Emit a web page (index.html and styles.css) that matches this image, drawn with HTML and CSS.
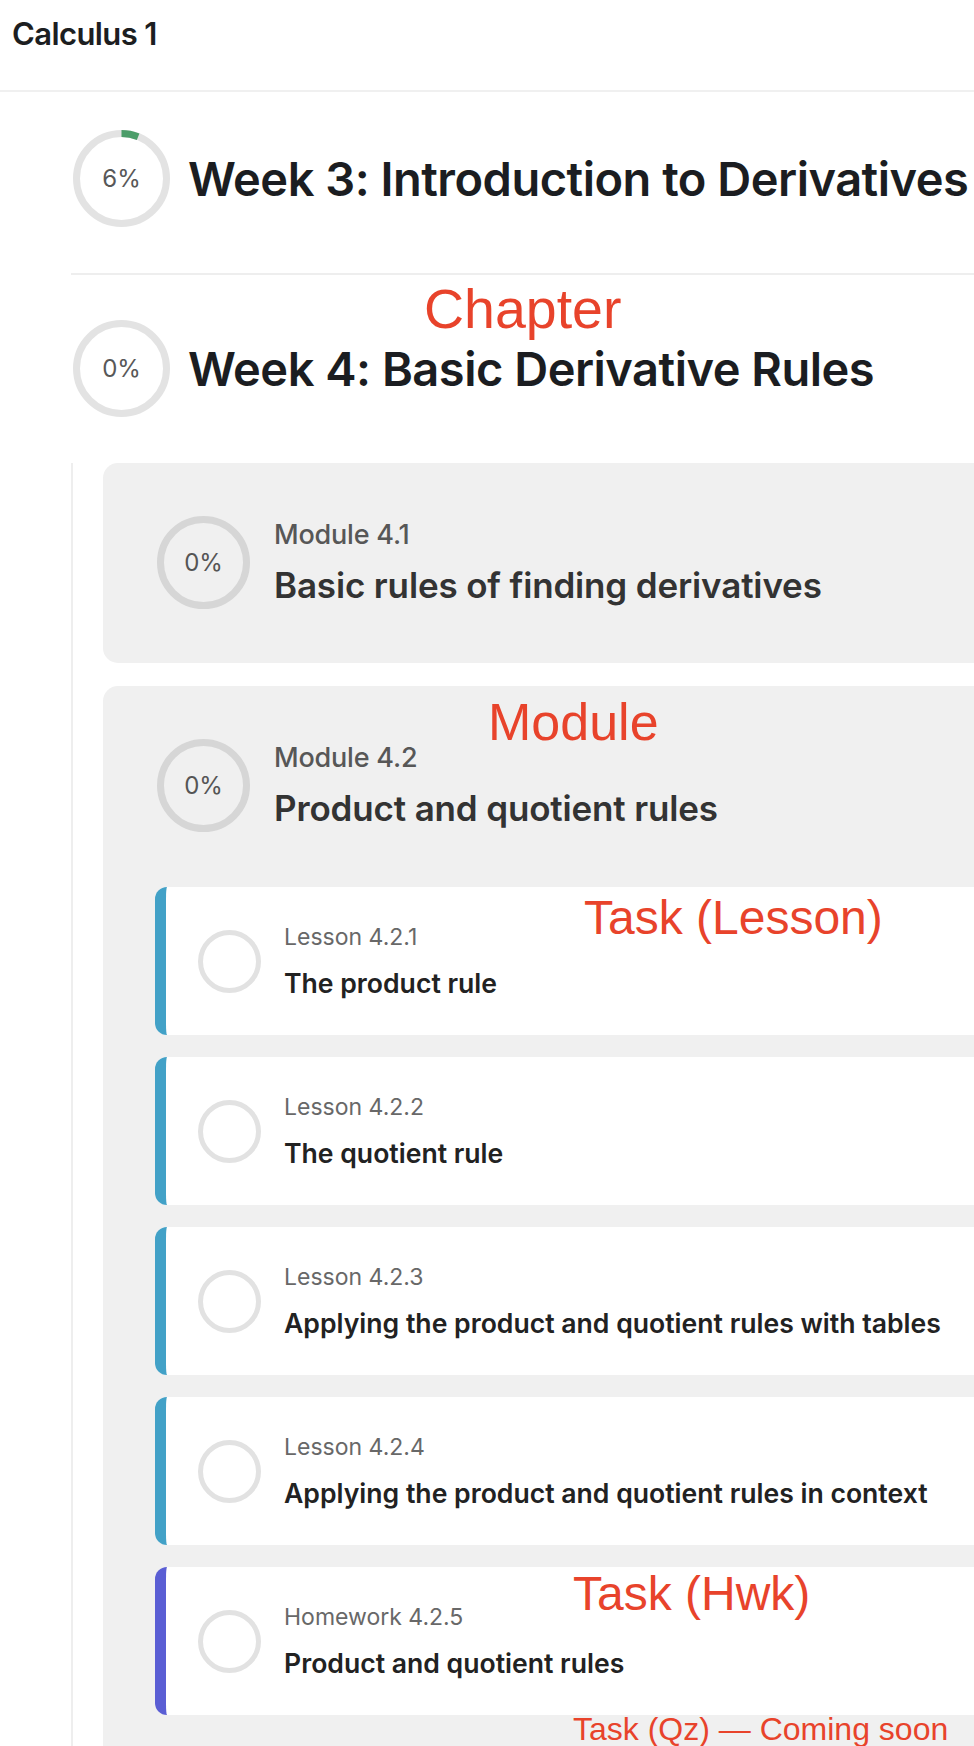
FILE: index.html
```html
<!DOCTYPE html>
<html lang="en">
<head>
<meta charset="utf-8">
<title>Calculus 1</title>
<link rel="stylesheet" href="styles.css">
</head>
<body>
<div class="page">
  <header class="topbar">
    <h1 class="course-title">Calculus 1</h1>
  </header>

  <main class="course">
    <section class="chapter">
      <div class="chapter-head first">
        <div class="ring ring-chapter">
          <svg viewBox="0 0 97 97" width="97" height="97">
            <circle cx="48.5" cy="48.5" r="45" fill="none" stroke="#e3e3e3" stroke-width="7"/>
            <circle cx="48.5" cy="48.5" r="45" fill="none" stroke="#4b9d69" stroke-width="7" stroke-dasharray="17 300" transform="rotate(-90 48.5 48.5)"/>
          </svg>
          <span class="ring-label">6%</span>
        </div>
        <h2 class="chapter-title">Week 3: Introduction to Derivatives</h2>
      </div>
    </section>

    <div class="divider"></div>

    <section class="chapter">
      <div class="chapter-head">
        <div class="ring ring-chapter">
          <svg viewBox="0 0 97 97" width="97" height="97">
            <circle cx="48.5" cy="48.5" r="45" fill="none" stroke="#e3e3e3" stroke-width="7"/>
          </svg>
          <span class="ring-label">0%</span>
        </div>
        <h2 class="chapter-title">Week 4: Basic Derivative Rules</h2>
      </div>

      <div class="modules">
        <article class="module">
          <div class="module-head">
            <div class="ring ring-module">
              <svg viewBox="0 0 93 93" width="93" height="93">
                <circle cx="46.5" cy="46.5" r="43" fill="none" stroke="#d6d6d6" stroke-width="7"/>
              </svg>
              <span class="ring-label module-pct">0%</span>
            </div>
            <div class="module-text">
              <div class="module-label">Module 4.1</div>
              <div class="module-title">Basic rules of finding derivatives</div>
            </div>
          </div>
        </article>

        <article class="module">
          <div class="module-head">
            <div class="ring ring-module">
              <svg viewBox="0 0 93 93" width="93" height="93">
                <circle cx="46.5" cy="46.5" r="43" fill="none" stroke="#d6d6d6" stroke-width="7"/>
              </svg>
              <span class="ring-label module-pct">0%</span>
            </div>
            <div class="module-text">
              <div class="module-label">Module 4.2</div>
              <div class="module-title">Product and quotient rules</div>
            </div>
          </div>

          <div class="tasks">
            <div class="task lesson">
              <svg class="task-ring" viewBox="0 0 63 63" width="63" height="63">
                <circle cx="31.5" cy="31.5" r="29" fill="none" stroke="#e2e2e2" stroke-width="5"/>
              </svg>
              <div class="task-text">
                <div class="task-label">Lesson 4.2.1</div>
                <div class="task-title">The product rule</div>
              </div>
            </div>
            <div class="task lesson">
              <svg class="task-ring" viewBox="0 0 63 63" width="63" height="63">
                <circle cx="31.5" cy="31.5" r="29" fill="none" stroke="#e2e2e2" stroke-width="5"/>
              </svg>
              <div class="task-text">
                <div class="task-label">Lesson 4.2.2</div>
                <div class="task-title">The quotient rule</div>
              </div>
            </div>
            <div class="task lesson">
              <svg class="task-ring" viewBox="0 0 63 63" width="63" height="63">
                <circle cx="31.5" cy="31.5" r="29" fill="none" stroke="#e2e2e2" stroke-width="5"/>
              </svg>
              <div class="task-text">
                <div class="task-label">Lesson 4.2.3</div>
                <div class="task-title">Applying the product and quotient rules with tables</div>
              </div>
            </div>
            <div class="task lesson">
              <svg class="task-ring" viewBox="0 0 63 63" width="63" height="63">
                <circle cx="31.5" cy="31.5" r="29" fill="none" stroke="#e2e2e2" stroke-width="5"/>
              </svg>
              <div class="task-text">
                <div class="task-label">Lesson 4.2.4</div>
                <div class="task-title">Applying the product and quotient rules in context</div>
              </div>
            </div>
            <div class="task homework">
              <svg class="task-ring" viewBox="0 0 63 63" width="63" height="63">
                <circle cx="31.5" cy="31.5" r="29" fill="none" stroke="#e2e2e2" stroke-width="5"/>
              </svg>
              <div class="task-text">
                <div class="task-label">Homework 4.2.5</div>
                <div class="task-title">Product and quotient rules</div>
              </div>
            </div>
          </div>
        </article>
      </div>
    </section>
  </main>

  <div class="note note-chapter">Chapter</div>
  <div class="note note-module">Module</div>
  <div class="note note-lesson">Task (Lesson)</div>
  <div class="note note-hwk">Task (Hwk)</div>
  <div class="note note-qz">Task (Qz) — Coming soon</div>
</div>
</body>
</html>
```

FILE: styles.css
```css
html, body {
  margin: 0;
  padding: 0;
  background: #ffffff;
  overflow: hidden;
}

.page {
  position: relative;
  width: 974px;
  height: 1746px;
  overflow: hidden;
  font-family: Inter, "Noto Sans", "Liberation Sans", sans-serif;
}

.topbar {
  height: 92px;
  box-sizing: border-box;
  padding: 16px 12px 0;
  border-bottom: 2px solid #f0f0f0;
}

.course-title {
  margin: 0;
  font-size: 31px;
  line-height: 36px;
  font-weight: 600;
  letter-spacing: -0.6px;
  color: #1c1e21;
}

.course {
  width: 1010px;
  padding-left: 71px;
}

.chapter-head {
  display: flex;
  align-items: center;
  gap: 18px;
  padding: 45px 0 46px 2px;
}

.chapter-head.first {
  padding-top: 38px;
}

.divider {
  height: 2px;
  background: #eeeeee;
}

.ring {
  display: grid;
  place-items: center;
  flex: none;
}

.ring > svg,
.ring > .ring-label {
  grid-area: 1 / 1;
}

.ring-label {
  font-size: 24px;
  font-weight: 400;
  color: #585858;
}

.module-pct {
  font-size: 24px;
  color: #555555;
}

.chapter-title {
  margin: 0;
  font-size: 47px;
  line-height: 56px;
  font-weight: 600;
  letter-spacing: -0.5px;
  color: #1b1d21;
  white-space: nowrap;
}

.modules {
  border-left: 2px solid #eeeeee;
  padding-left: 30px;
  display: flex;
  flex-direction: column;
  gap: 23px;
}

.module {
  background: #f0f0f0;
  border-radius: 15px;
  padding: 53px 0 54px 52px;
}

.module-head {
  display: flex;
  align-items: center;
  gap: 24px;
  padding-left: 2px;
}

.module-text {
  display: flex;
  flex-direction: column;
  gap: 13px;
}

.module-label {
  font-size: 27px;
  line-height: 32px;
  font-weight: 500;
  color: #575757;
  letter-spacing: -0.2px;
}

.module-title {
  font-size: 35px;
  line-height: 42px;
  font-weight: 600;
  color: #333333;
  letter-spacing: -0.15px;
  white-space: nowrap;
}

.tasks {
  margin-top: 55px;
  display: flex;
  flex-direction: column;
  gap: 22px;
}

.task {
  height: 148px;
  box-sizing: border-box;
  background: #ffffff;
  border-left: 11px solid #42a1c7;
  border-radius: 12px;
  display: flex;
  align-items: center;
  gap: 23px;
  padding-left: 32px;
}

.task.homework {
  border-left-color: #5a5ed4;
}

.task-ring {
  flex: none;
}

.task-text {
  display: flex;
  flex-direction: column;
  gap: 16px;
}

.task-label {
  font-size: 23px;
  line-height: 28px;
  font-weight: 400;
  color: #686868;
}

.task-title {
  font-size: 26.6px;
  line-height: 32px;
  font-weight: 600;
  color: #222222;
  white-space: nowrap;
}

.note {
  position: absolute;
  font-family: "Liberation Sans", Arial, sans-serif;
  line-height: 1;
  color: #e8432b;
  white-space: nowrap;
}

.note-chapter {
  left: 424px;
  top: 282px;
  font-size: 55.5px;
}

.note-module {
  left: 488px;
  top: 696px;
  font-size: 52px;
}

.note-lesson {
  left: 584px;
  top: 894px;
  font-size: 48px;
}

.note-hwk {
  left: 573px;
  top: 1570px;
  font-size: 48px;
}

.note-qz {
  left: 573px;
  top: 1713px;
  font-size: 32px;
}
```
